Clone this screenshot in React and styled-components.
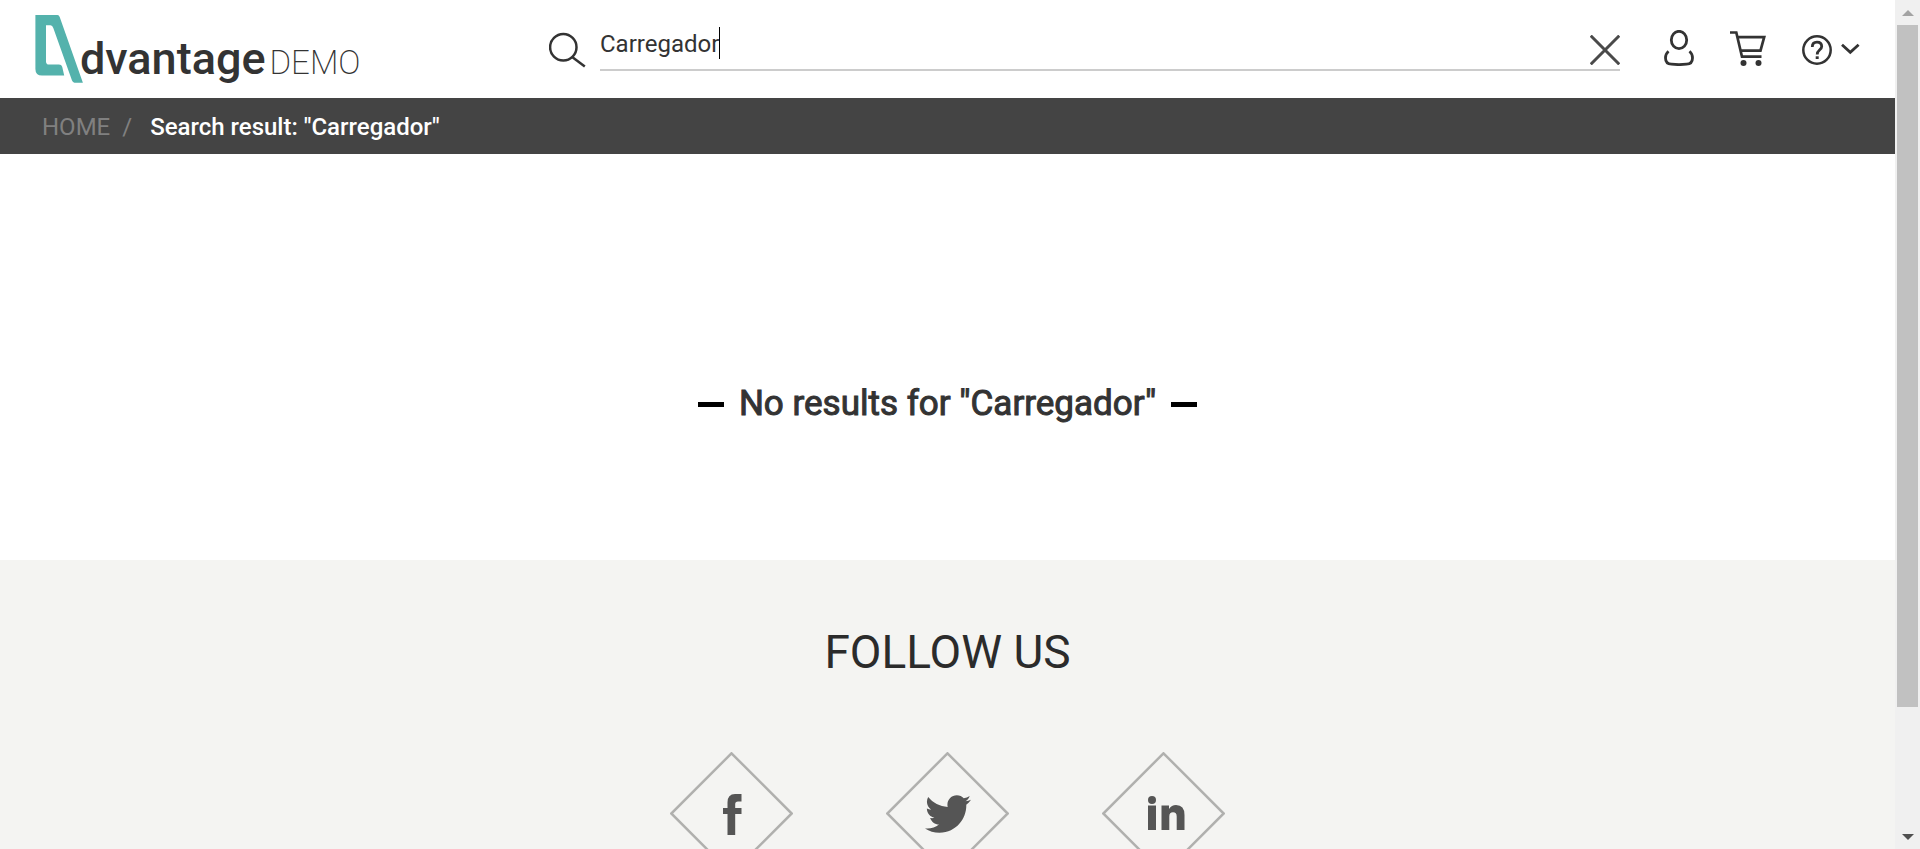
import React, { useState } from "react";
import styled, { createGlobalStyle } from "styled-components";
import { FaTwitter } from "react-icons/fa";

const GlobalStyle = createGlobalStyle`
  * { box-sizing: border-box; }
  body {
    margin: 0;
    background: #fff;
    color: #2b2b2b;
    font-family: Roboto, "Liberation Sans", sans-serif;
  }
`;

const Shell = styled.div`
  display: flex;
  height: 100vh;
  overflow: hidden;
`;

const Page = styled.div`
  flex: 1;
  min-width: 0;
`;

const Header = styled.header`
  display: grid;
  grid-template-columns: 514px 1fr auto;
  height: 98px;
  padding: 0 35px;
`;

const Logo = styled.a`
  display: flex;
  align-items: flex-start;
  padding-top: 15px;
  color: #333;
  text-decoration: none;
  white-space: nowrap;
`;

const Brand = styled.span`
  display: flex;
  align-items: baseline;
  gap: 4px;
  margin-left: -5px;
  padding-top: 17px;
  font-size: 45px;
  font-weight: 500;
  line-height: 54px;
`;

const BrandSuffix = styled.span`
  font-size: 33px;
  font-weight: 200;
`;

const Search = styled.form`
  display: flex;
  gap: 14px;
`;

const IconButton = styled.button`
  display: flex;
  align-items: flex-start;
  padding: ${(p) => p.$top}px 0 0;
  border: 0;
  background: none;
  color: #333;
`;

const Field = styled.div`
  flex: 1;
  display: flex;
  align-items: flex-start;
  height: 71px;
  border-bottom: 2px solid #ccc;
`;

const FieldText = styled.div`
  flex: 1;
  display: flex;
  padding-top: 27px;
`;

const SearchInput = styled.input`
  field-sizing: content;
  height: 34px;
  padding: 0;
  border: 0;
  outline: 0;
  background: none;
  color: #333;
  caret-color: transparent;
  font: 400 24px/34px Roboto, "Liberation Sans", sans-serif;
`;

const Caret = styled.span`
  width: 1px;
  height: 32px;
  background: #000;
`;

const Actions = styled.nav`
  display: flex;
  gap: 36px;
  padding-left: 44px;
`;

const Breadcrumb = styled.nav`
  display: flex;
  align-items: center;
  height: 56px;
  padding: 2px 42px 0;
  background: #444;
  color: #fff;
  font-size: 24px;
  line-height: 32px;
`;

const Crumb = styled.a`
  color: #808080;
  text-decoration: none;
`;

const Slash = styled.span`
  margin: 0 18px 0 12px;
  color: #808080;
`;

const Current = styled.span`
  font-weight: 500;
`;

const Results = styled.main`
  display: flex;
  justify-content: center;
  height: 406px;
  padding-top: 226px;
`;

const Message = styled.h1`
  display: flex;
  align-items: center;
  gap: 15px;
  height: 48px;
  margin: 0;
  color: #333;
  font-size: 35px;
  font-weight: 400;
  line-height: 48px;
  -webkit-text-stroke: 1px #333;

  &::before,
  &::after {
    content: "";
    width: 26px;
    height: 5px;
    background: #000;
  }
`;

const Footer = styled.footer`
  display: flex;
  flex-direction: column;
  align-items: center;
  min-height: 400px;
  padding-top: 64px;
  background: #f4f4f2;
`;

const FollowTitle = styled.h2`
  margin: 0 0 72px;
  font-size: 46px;
  font-weight: 400;
  line-height: 56px;
`;

const SocialList = styled.div`
  display: flex;
  gap: 93px;
`;

const SocialLink = styled.a`
  display: grid;
  place-items: center;
  color: #555;

  > * { grid-area: 1 / 1; }
`;

const Scrollbar = styled.div`
  display: flex;
  flex-direction: column;
  width: 25px;
  padding: 0 2px;
  background: #f0f0f0;
`;

const ScrollArrow = styled.div`
  display: flex;
  justify-content: center;
  align-items: center;
  height: 25px;
  color: ${(p) => p.$color};
`;

const ScrollTrack = styled.div`
  flex: 1;
`;

const ScrollThumb = styled.div`
  height: 85.4%;
  background: #c1c1c1;
`;

const LogoMark = () => (
  <svg width="50" height="68" viewBox="0 0 50 68" fill="#54b2ac" aria-hidden="true">
    <path d="M.4 0H22.5Q24 0 24.7 2L47.9 67.7H39.5Q37.8 67.7 37 65.6L18.3 13Q17.4 10.3 15.5 10.3H11V46.5Q11 49.6 14 49.6H24Q26.5 49.6 27.2 51.8L29.2 60.6H7Q.4 60.6 .4 54Z" />
  </svg>
);

const SearchIcon = () => (
  <svg width="37" height="36" viewBox="0 0 37 36" fill="none" stroke="currentColor" strokeWidth="2.5" aria-hidden="true">
    <circle cx="14.3" cy="15.3" r="13.2" />
    <path d="M23.5 25.3L35.8 34.5" />
  </svg>
);

const CloseIcon = () => (
  <svg width="30" height="30" viewBox="0 0 30 30" stroke="#4a4a4a" strokeWidth="3" aria-hidden="true">
    <path d="M.7 .7L29.3 29.3M29.3 .7L.7 29.3" />
  </svg>
);

const UserIcon = () => (
  <svg width="30" height="36" viewBox="0 0 30 36" fill="none" stroke="currentColor" strokeWidth="2.8" aria-hidden="true">
    <ellipse cx="15" cy="10" rx="7.7" ry="8.7" />
    <path d="M4.5 21.3C2 23.5 1.5 26 1.5 28C1.5 32 3.5 34 7.5 34.2C12 34.7 18 34.7 22.5 34.2C26.5 34 28.5 32 28.5 28C28.5 26 28 23.5 25.5 21.3" />
  </svg>
);

const CartIcon = () => (
  <svg width="36" height="36" viewBox="0 0 36 36" fill="none" stroke="currentColor" strokeWidth="2.7" aria-hidden="true">
    <path d="M0 2.5H6.3L12 26.7H31.5M7.3 7.2H34.2L30.5 20.7H10.8" />
    <circle cx="13.5" cy="33" r="3" fill="currentColor" stroke="none" />
    <circle cx="28.5" cy="33" r="3" fill="currentColor" stroke="none" />
  </svg>
);

const HelpIcon = () => (
  <svg width="58" height="30" viewBox="0 0 58 30" fill="none" stroke="currentColor" strokeWidth="2.5" aria-hidden="true">
    <circle cx="15" cy="15" r="13.7" />
    <path d="M10.3 12Q10.3 7.2 15 7.2Q19.7 7.2 19.7 11.5C19.7 14.8 15.2 14.8 15.2 19.5" strokeWidth="2.8" />
    <path d="M15.2 21.3V24" strokeWidth="3" />
    <path d="M40 9.8L48.3 17.3L56.6 9.8" strokeWidth="2.8" />
  </svg>
);

const Diamond = () => (
  <svg width="123" height="123" viewBox="0 0 123 123" fill="none" stroke="#b0b0ae" strokeWidth="2.5" aria-hidden="true">
    <path d="M61.5 1.3L121.7 61.5L61.5 121.7L1.3 61.5Z" />
  </svg>
);

const FacebookIcon = () => (
  <svg width="20" height="42" viewBox="0 0 20 42" fill="currentColor" aria-hidden="true">
    <path d="M5.5 42V21H1V15H5.5V9.5Q5.5 1 13 1H19.5V8.5H16Q13.2 8.5 13.2 11.3V15H19.5V21H13.2V42Z" />
  </svg>
);

const LinkedinIcon = () => (
  <svg width="42" height="38" viewBox="-4 0 42 38" fill="currentColor" aria-hidden="true">
    <circle cx="5" cy="5" r="4" />
    <path d="M1 10.5H9V35H1ZM14.5 10.5H22V14Q24.5 10 29 10Q37.5 10 37.5 20V35H29.7V21.5Q29.7 17.3 26 17.3Q22.3 17.3 22.3 21.5V35H14.5Z" />
  </svg>
);

const ArrowIcon = ({ down }) => (
  <svg width="12" height="6" viewBox="0 0 12 6" fill="currentColor" aria-hidden="true">
    <path d={down ? "M0 0H12L6 6Z" : "M0 6H12L6 0Z"} />
  </svg>
);

const SOCIALS = [
  { name: "Facebook", icon: <FacebookIcon /> },
  { name: "Twitter", icon: <FaTwitter size={46} /> },
  { name: "LinkedIn", icon: <LinkedinIcon /> },
];

export default function App() {
  const [query, setQuery] = useState("Carregador");
  const searched = "Carregador";

  return (
    <Shell>
      <GlobalStyle />
      <Page>
        <Header>
          <Logo href="#home">
            <LogoMark />
            <Brand>
              dvantage<BrandSuffix>DEMO</BrandSuffix>
            </Brand>
          </Logo>
          <Search role="search" onSubmit={(e) => e.preventDefault()}>
            <IconButton type="submit" aria-label="Search" $top={32}>
              <SearchIcon />
            </IconButton>
            <Field>
              <FieldText>
                <SearchInput
                  aria-label="Search products"
                  value={query}
                  onChange={(e) => setQuery(e.target.value)}
                />
                <Caret />
              </FieldText>
              <IconButton type="button" aria-label="Clear search" $top={35} onClick={() => setQuery("")}>
                <CloseIcon />
              </IconButton>
            </Field>
          </Search>
          <Actions aria-label="Account">
            <IconButton type="button" aria-label="User" $top={30}>
              <UserIcon />
            </IconButton>
            <IconButton type="button" aria-label="Cart" $top={30}>
              <CartIcon />
            </IconButton>
            <IconButton type="button" aria-label="Help" $top={35}>
              <HelpIcon />
            </IconButton>
          </Actions>
        </Header>
        <Breadcrumb aria-label="Breadcrumb">
          <Crumb href="#home">HOME</Crumb>
          <Slash>/</Slash>
          <Current>Search result: "{searched}"</Current>
        </Breadcrumb>
        <Results>
          <Message>No results for "{searched}"</Message>
        </Results>
        <Footer>
          <FollowTitle>FOLLOW US</FollowTitle>
          <SocialList>
            {SOCIALS.map((s) => (
              <SocialLink key={s.name} href={"#" + s.name.toLowerCase()} aria-label={s.name}>
                <Diamond />
                {s.icon}
              </SocialLink>
            ))}
          </SocialList>
        </Footer>
      </Page>
      <Scrollbar aria-hidden="true">
        <ScrollArrow $color="#a3a3a3">
          <ArrowIcon />
        </ScrollArrow>
        <ScrollTrack>
          <ScrollThumb />
        </ScrollTrack>
        <ScrollArrow $color="#505050">
          <ArrowIcon down />
        </ScrollArrow>
      </Scrollbar>
    </Shell>
  );
}
